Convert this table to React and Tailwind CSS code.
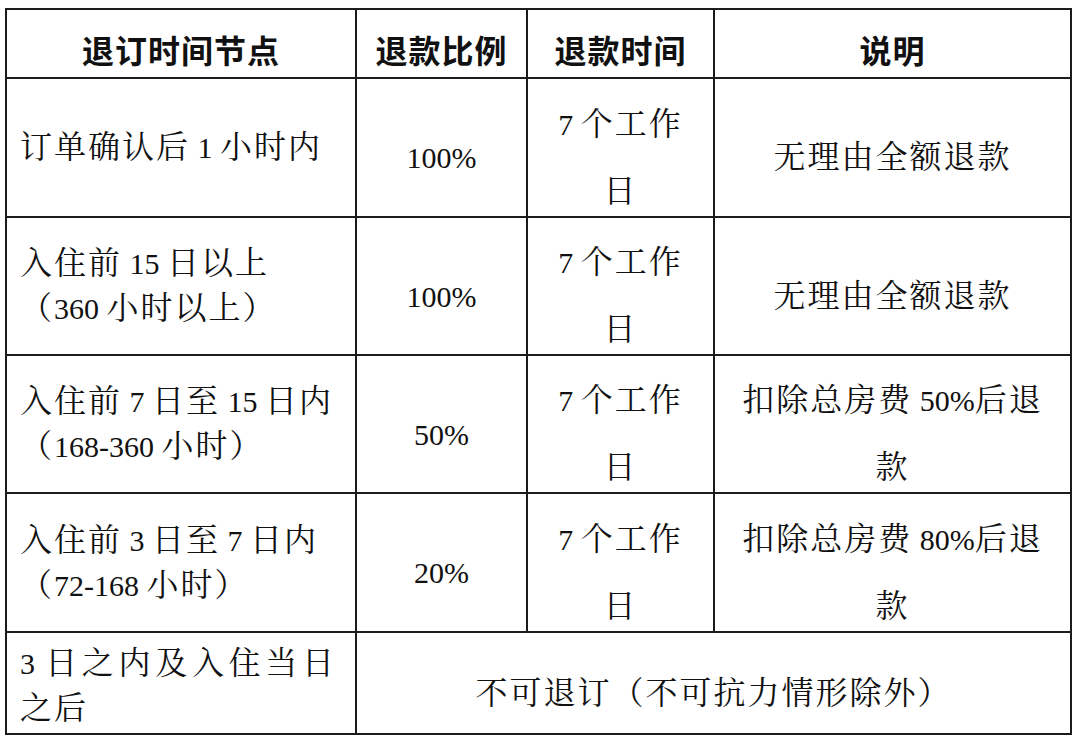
import React from "react";

const C1 = "bg-white flex flex-col justify-center pl-[13px] leading-[44px] whitespace-nowrap";
const C2 = "bg-white flex flex-col justify-center items-center pt-[20px] whitespace-nowrap";
const C3 = "bg-white flex flex-col justify-center items-center pt-[20px] leading-[67px] whitespace-nowrap";
const C4 = "bg-white flex flex-col justify-center items-center pt-[20px] leading-[67px] whitespace-nowrap";
const H = "bg-white flex items-center justify-center pt-[10px] font-bold font-['Noto_Sans_CJK_SC',sans-serif] text-[32px] tracking-[1px]";

function L({ children }) {
  return <span className="text-[30px] tracking-[0px]">{children}</span>;
}

function WorkDays() {
  return (
    <div className={C3}>
      <div>
        <L>7 </L>个工作
      </div>
      <div>日</div>
    </div>
  );
}

export default function App() {
  return (
    <div className="w-[1080px] h-[743px] bg-white pl-[5px] pt-[8px] text-[#111] text-[32px] tracking-[2px] font-['Liberation_Serif','Noto_Serif_CJK_SC','Noto_Sans_CJK_SC',serif] font-normal">
      <div className="grid w-[1067px] grid-cols-[348px_169px_185px_355px] grid-rows-[67px_137px_136px_136px_137px_100px] gap-[2px] border-2 border-[#1c1c1c] bg-[#1c1c1c]">
        <div className={H}>退订时间节点</div>
        <div className={H}>退款比例</div>
        <div className={H}>退款时间</div>
        <div className={H}>说明</div>

        <div className={C1}>
          <div>
            订单确认后<L> 1 </L>小时内
          </div>
        </div>
        <div className={C2}>
          <L>100%</L>
        </div>
        <WorkDays />
        <div className={C4}>
          <div>无理由全额退款</div>
        </div>

        <div className={C1}>
          <div>
            入住前<L> 15 </L>日以上
          </div>
          <div>
            （<L>360 </L>小时以上）
          </div>
        </div>
        <div className={C2}>
          <L>100%</L>
        </div>
        <WorkDays />
        <div className={C4}>
          <div>无理由全额退款</div>
        </div>

        <div className={C1}>
          <div>
            入住前<L> 7 </L>日至<L> 15 </L>日内
          </div>
          <div>
            （<L>168-360 </L>小时）
          </div>
        </div>
        <div className={C2}>
          <L>50%</L>
        </div>
        <WorkDays />
        <div className={C4}>
          <div>
            扣除总房费<L> 50%</L>后退
          </div>
          <div>款</div>
        </div>

        <div className={C1}>
          <div>
            入住前<L> 3 </L>日至<L> 7 </L>日内
          </div>
          <div>
            （<L>72-168 </L>小时）
          </div>
        </div>
        <div className={C2}>
          <L>20%</L>
        </div>
        <WorkDays />
        <div className={C4}>
          <div>
            扣除总房费<L> 80%</L>后退
          </div>
          <div>款</div>
        </div>

        <div className="bg-white flex flex-col justify-center pl-[13px] pt-[4px] leading-[44px] whitespace-nowrap">
          <div className="w-[316px] text-justify [text-align-last:justify]">
            <L>3 </L>日之内及入住当日
          </div>
          <div>之后</div>
        </div>
        <div className="col-span-3 bg-white flex items-center justify-center pt-[20px] whitespace-nowrap">
          不可退订（不可抗力情形除外）
        </div>
      </div>
    </div>
  );
}
